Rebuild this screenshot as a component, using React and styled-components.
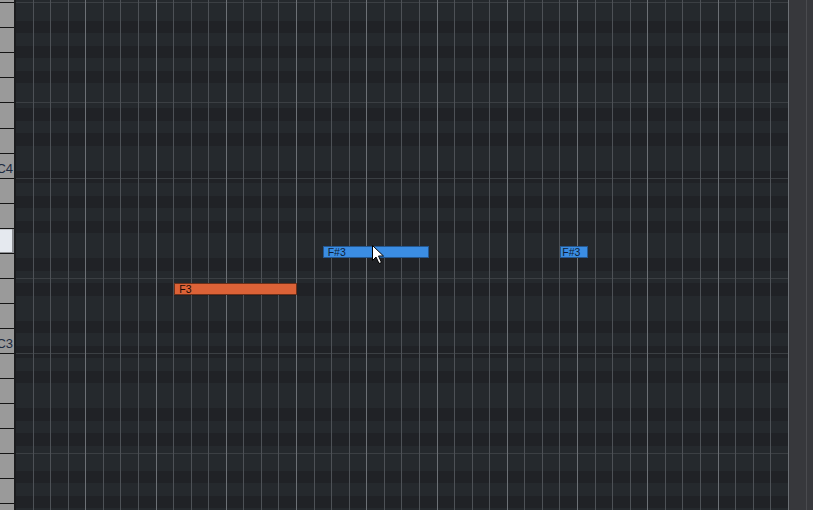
import React from "react";
import styled, { createGlobalStyle } from "styled-components";

const KEY_H = 25.05;
const COL_W = 17.575;
const ROW_H = 12.5;
const COLS = 44;

const Global = createGlobalStyle`
  html, body { margin: 0; padding: 0; background: #232629; overflow: hidden; }
  #root { width: 813px; height: 510px; }
`;

const Editor = styled.div`
  display: flex;
  width: 813px;
  height: 510px;
  overflow: hidden;
  font-family: "Liberation Sans", Arial, sans-serif;
`;

/* piano keyboard on the left */
const Keyboard = styled.div`
  flex: none;
  width: 14px;
  border-right: 2px solid #1b1c1e;
  background: #9a9a9a;
  overflow: hidden;
`;

const KeyStack = styled.div`
  display: flex;
  flex-direction: column;
  margin-top: ${2.3 - KEY_H}px;
`;

const Key = styled.div`
  flex: none;
  height: ${KEY_H}px;
  box-sizing: border-box;
  border-top: 1px solid #141414;
  background: ${(p) => (p.$active ? "#e5e9ef" : "#9a9a9a")};
  box-shadow: ${(p) =>
    p.$active ? "inset -2px -1px 0 #8e9094, inset 0 1px 0 #c8cbd0" : "none"};
  display: flex;
  align-items: flex-end;
  justify-content: flex-end;
`;

const KeyLabel = styled.span`
  font-size: 13px;
  line-height: 1;
  color: #1d2a40;
  padding-bottom: 3px;
  margin-right: 1px;
  white-space: nowrap;
`;

/* note grid */
const Roll = styled.div`
  flex: 1;
  min-width: 0;
  display: flex;
`;

const Canvas = styled.div`
  flex: none;
  width: ${COLS * COL_W}px;
  display: grid;
  overflow: hidden;
`;

const Layer = styled.div`
  grid-area: 1 / 1;
  min-height: 0;
`;

const LaneStack = styled(Layer)`
  display: flex;
  flex-direction: column;
  margin-top: -4.25px;
`;

const Lane = styled.div`
  flex: none;
  height: ${ROW_H}px;
  background: ${(p) => (p.$dark ? "#202226" : "#25292d")};
`;

const OctaveStack = styled(Layer)`
  display: flex;
  flex-direction: column;
  margin-top: 2.3px;
`;

const OctaveSlot = styled.div`
  flex: none;
  height: ${KEY_H}px;
  box-sizing: border-box;
  border-top: 1px solid ${(p) => (p.$line ? "#3b3f43" : "transparent")};
`;

const BeatStack = styled(Layer)`
  display: flex;
`;

const Beat = styled.div`
  flex: none;
  width: ${COL_W}px;
  box-sizing: border-box;
  border-right: 1px solid ${(p) => (p.$strong ? "#6c7075" : "#4d5156")};
`;

const NoteLayer = styled(Layer)`
  position: relative;
`;

const Note = styled.div`
  position: absolute;
  box-sizing: border-box;
  height: 12px;
  border: 1px solid ${(p) => (p.$kind === "red" ? "#6e3019" : "#24578f")};
  background: ${(p) => (p.$kind === "red" ? "#dc6237" : "#3b8de3")};
  color: ${(p) => (p.$kind === "red" ? "#1a0b05" : "#0d1d36")};
  font-size: 10.5px;
  line-height: 10px;
  padding-left: ${(p) => p.$pad}px;
  white-space: nowrap;
  overflow: hidden;
`;

const Pointer = styled.svg`
  position: absolute;
  pointer-events: none;
`;

/* region past the end of the song */
const EndZone = styled.div`
  flex: 1;
  background: #37383c;
  display: flex;
`;

const EndBeat = styled.div`
  flex: none;
  width: ${COL_W}px;
  box-sizing: border-box;
  border-right: 1px solid #4a4b4f;
`;

const KEYS = Array.from({ length: 22 }, (_, i) => i - 1);
const KEY_LABELS = { 6: "C4", 13: "C3" };
const ACTIVE_KEY = 9;

const DARK_LANES = new Set([2, 4, 6, 9, 11]);
const LANES = Array.from({ length: 44 }, (_, i) => DARK_LANES.has(i % 12));

const OCTAVE_LINES = new Set([0, 4, 7, 11, 14, 18]);
const SLOTS = Array.from({ length: 21 }, (_, i) => OCTAVE_LINES.has(i));

const NOTES = [
  { kind: "red", label: "F3", x: 158.3, y: 283, w: 123, pad: 4 },
  { kind: "blue", label: "F#3", x: 306.7, y: 246, w: 106, pad: 4 },
  { kind: "blue", label: "F#3", x: 544.3, y: 246, w: 27.5, pad: 1 },
];

export default function App() {
  return (
    <>
      <Global />
      <Editor>
        <Keyboard>
          <KeyStack>
            {KEYS.map((k) => (
              <Key key={k} $active={k === ACTIVE_KEY}>
                {KEY_LABELS[k] && <KeyLabel>{KEY_LABELS[k]}</KeyLabel>}
              </Key>
            ))}
          </KeyStack>
        </Keyboard>
        <Roll>
          <Canvas>
            <LaneStack>
              {LANES.map((dark, i) => (
                <Lane key={i} $dark={dark} />
              ))}
            </LaneStack>
            <OctaveStack>
              {SLOTS.map((line, i) => (
                <OctaveSlot key={i} $line={line} />
              ))}
            </OctaveStack>
            <BeatStack>
              {Array.from({ length: COLS }, (_, i) => (
                <Beat key={i} $strong={(i + 1) % 4 === 0} />
              ))}
            </BeatStack>
            <NoteLayer>
              {NOTES.map((n, i) => (
                <Note
                  key={i}
                  $kind={n.kind}
                  $pad={n.pad}
                  style={{ left: n.x, top: n.y, width: n.w }}
                >
                  {n.label}
                </Note>
              ))}
              <Pointer
                width="13"
                height="20"
                viewBox="0 0 13 20"
                style={{ left: 355.5, top: 244.5 }}
              >
                <path
                  d="M0.5 0.5 L0.5 15.5 L4 12 L7 18.5 L9.5 17.5 L6.5 11 L11.5 11 Z"
                  fill="#ffffff"
                  stroke="#000000"
                  strokeWidth="1"
                  strokeLinejoin="miter"
                />
              </Pointer>
            </NoteLayer>
          </Canvas>
          <EndZone>
            <EndBeat />
          </EndZone>
        </Roll>
      </Editor>
    </>
  );
}
